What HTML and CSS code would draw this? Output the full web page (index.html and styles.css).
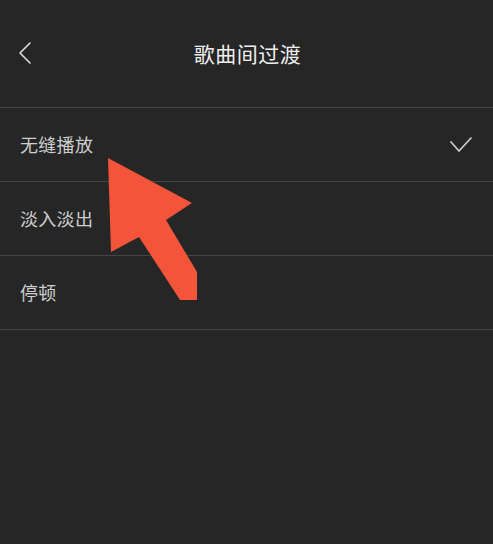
FILE: index.html
```html
<!DOCTYPE html>
<html lang="zh-CN">
<head>
<meta charset="utf-8">
<title>歌曲间过渡</title>
<link rel="stylesheet" href="styles.css">
</head>
<body>
<div class="screen">
  <header class="topbar">
    <span class="back">
      <svg width="14" height="24" viewBox="0 0 14 24"><polyline points="12,2 2,12 12,22" fill="none" stroke="#dcdcdc" stroke-width="1.6" stroke-linecap="round" stroke-linejoin="round"/></svg>
    </span>
    <h1 class="title">歌曲间过渡</h1>
  </header>
  <ul class="list">
    <li class="row"><span class="label">无缝播放</span>
      <svg class="check" width="24" height="18" viewBox="0 0 24 18"><polyline points="2,6 10,15 22,2" fill="none" stroke="#cfcfcf" stroke-width="1.7" stroke-linecap="round" stroke-linejoin="round"/></svg>
    </li>
    <li class="row"><span class="label">淡入淡出</span></li>
    <li class="row"><span class="label">停顿</span></li>
  </ul>
  <svg class="arrow" width="493" height="544" viewBox="0 0 493 544">
    <polygon points="108,158 192,203 166,220 197,272 197,300 180,300 139,237 111,252" fill="#f4543a"/>
  </svg>
</div>
</body>
</html>
```
FILE: styles.css
```css
html, body {
  margin: 0;
  padding: 0;
  background: #262626;
}
body {
  font-family: "Noto Sans CJK SC", "Noto Sans", sans-serif;
}
.screen {
  position: relative;
  width: 493px;
  height: 544px;
  overflow: hidden;
  background: #262626;
}
.topbar {
  position: relative;
  height: 108px;
  border-bottom: 1px solid #444444;
  display: flex;
  align-items: center;
  justify-content: center;
  box-sizing: border-box;
}
.back {
  position: absolute;
  left: 18px;
  top: 41px;
  display: flex;
}
.title {
  margin: 0;
  margin-top: -2px;
  margin-left: 2px;
  font-size: 21px;
  font-weight: 400;
  color: #efefef;
  letter-spacing: 0.5px;
}
.list {
  list-style: none;
  margin: 0;
  padding: 0;
}
.row {
  height: 74px;
  box-sizing: border-box;
  border-bottom: 1px solid #444444;
  display: flex;
  align-items: center;
  justify-content: space-between;
  padding: 0 20px;
}
.label {
  font-size: 18px;
  color: #cecece;
  letter-spacing: 0.3px;
  margin-top: -2px;
}
.arrow {
  position: absolute;
  left: 0;
  top: 0;
  pointer-events: none;
}
```
